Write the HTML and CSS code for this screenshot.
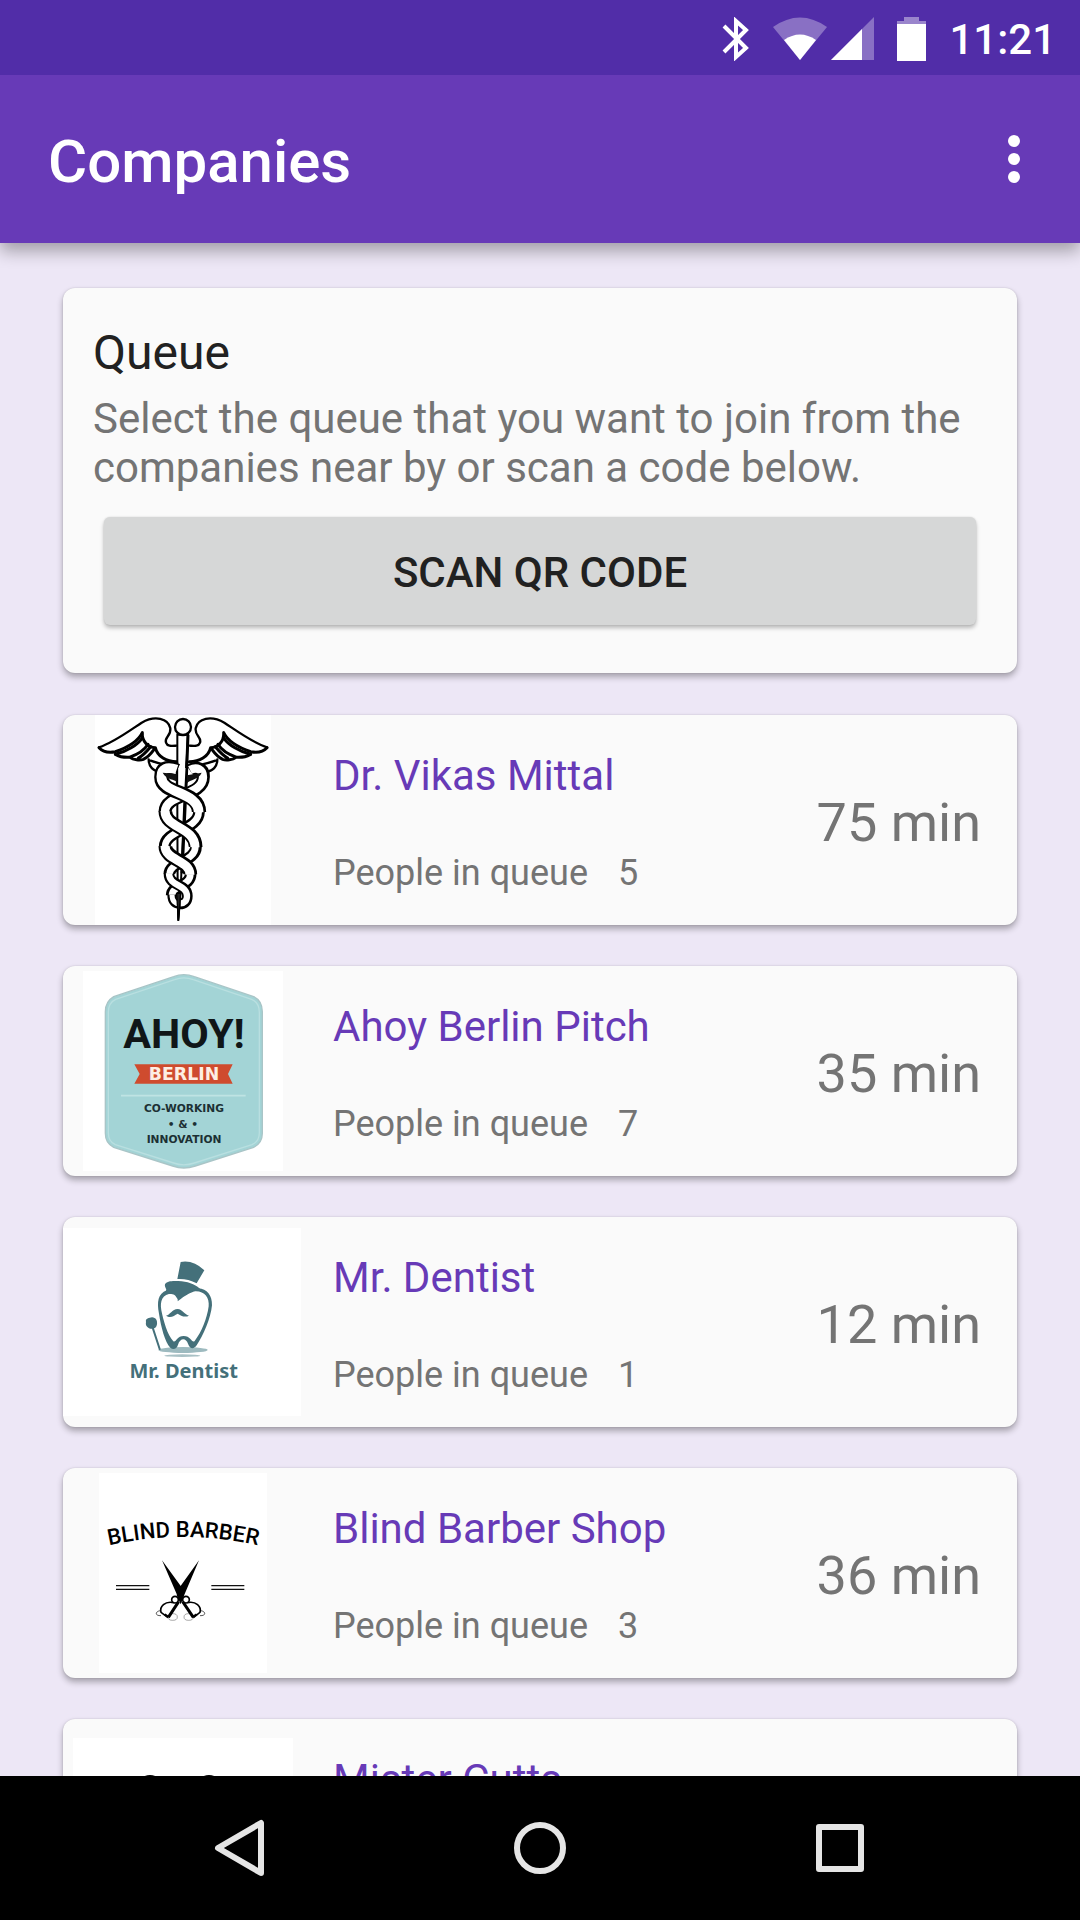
FILE: index.html
```html
<!DOCTYPE html>
<html lang="en">
<head>
<meta charset="utf-8">
<meta name="viewport" content="width=device-width, initial-scale=1">
<title>Companies</title>
<link rel="stylesheet" href="styles.css">
</head>
<body>
<div class="status-bar">
  <svg class="status-icon" width="28" height="44" viewBox="0 0 28 44" aria-label="Bluetooth"><path d="M2 9L24 31 14 40V4L24 13 2 35" fill="none" stroke="#fff" stroke-width="4"/></svg>
  <div class="status-group">
    <svg class="status-icon" width="54" height="44" viewBox="0 0 54 44" aria-label="Wi-Fi"><path d="M0 10Q27-9 54 10L27 43Z" fill="#fff" opacity=".32"/><path d="M11 23Q27 12 43 23L27 43Z" fill="#fff"/></svg>
    <svg class="status-icon" width="43" height="44" viewBox="0 0 43 44" aria-label="Mobile signal"><path d="M43 0V43H0Z" fill="#fff" opacity=".32"/><path d="M31 12V43H0Z" fill="#fff"/></svg>
  </div>
  <svg class="status-icon" width="29" height="44" viewBox="0 0 29 44" aria-label="Battery"><path d="M7 0H22V4H29V8H0V4H7Z" fill="#fff" opacity=".42"/><path d="M0 7H29V44H0Z" fill="#fff"/></svg>
  <time class="clock">11:21</time>
</div>
<header class="app-bar">
  <h1 class="app-title">Companies</h1>
  <button class="menu-button" type="button" aria-label="More options">
    <svg width="12" height="48" viewBox="0 0 12 48" fill="#fff"><circle cx="6" cy="6" r="6"/><circle cx="6" cy="24" r="6"/><circle cx="6" cy="42" r="6"/></svg>
  </button>
</header>
<main class="content">
  <section class="card queue-card">
    <h2 class="queue-title">Queue</h2>
    <p class="queue-text">Select the queue that you want to join from the companies near by or scan a code below.</p>
    <button class="scan-button" type="button">SCAN QR CODE</button>
  </section>
  <a class="card company" href="#vikas">
    <span class="logo">
      <svg width="176" height="210" viewBox="105 45 528 630">
        <path fill="#fff" d="M105 45h528v630H105z"/>
        <defs>
          <g id="wing" fill="none" stroke="#000" stroke-width="7" stroke-linejoin="round" stroke-linecap="round">
            <path d="M117 142C160 128 200 98 245 68C285 45 325 55 331 85C334 108 312 112 318 128C322 140 335 138 349 137"/>
            <path stroke-width="9" d="M117 143C130 157 150 158 166 155C205 142 235 122 247 98C245 125 265 142 286 143C292 170 320 185 350 185"/>
            <path stroke-width="9" d="M166 163C200 155 232 135 246 115M168 164C185 174 200 172 208 172C238 162 255 148 264 133M210 172C220 180 240 182 250 178C268 170 275 158 284 146M235 174C250 166 262 152 272 140"/>
            <path d="M266 178C266 200 280 214 300 214M272 182C300 192 320 198 348 198"/>
          </g>
        </defs>
        <use href="#wing"/>
        <use href="#wing" transform="translate(738 0) scale(-1 1)"/>
        <path d="M352 104V330L353 570L355 662L362 570L372 330L384 104Z" fill="#fff" stroke="#000" stroke-width="6"/>
        <path d="M384 104L378 260L366 520" fill="none" stroke="#000" stroke-width="9"/>
        <path d="M350 575L355 662L362 575Z" fill="#222" stroke="#000" stroke-width="4"/>
        <circle cx="369" cy="81" r="24" fill="#fff" stroke="#000" stroke-width="7"/>
        <g fill="none">
          <path d="M390 212C410 198 432 205 430 232C430 290 315 280 315 335" stroke="#000" stroke-width="39"/>
          <path d="M390 210C410 200 429 207 429 232C429 288 315 282 315 335" stroke="#fff" stroke-width="25"/>
          <path d="M417 335C417 390 314 390 314 440M408 440C408 485 328 485 328 522M392 522C392 560 335 555 335 586" stroke="#000" stroke-width="35"/>
          <path d="M416 335C416 390 315 390 315 440M406 440C406 485 329 485 329 522M391 522C391 560 336 555 336 586" stroke="#fff" stroke-width="20"/>
          <path d="M335 584C335 605 345 615 365 613" stroke="#000" stroke-width="26"/>
          <path d="M336 584C336 603 345 613 362 611" stroke="#fff" stroke-width="15"/>
        </g>
        <path d="M351 204L380 204L377 262L351 254Z" fill="#fff"/><path d="M351 185V258M381 185L377 262" fill="none" stroke="#000" stroke-width="7"/>
        <g fill="none">
          <path d="M350 212C320 196 304 206 304 232C304 285 417 270 417 336" stroke="#000" stroke-width="43"/>
          <path d="M350 209C320 199 304 206 304 230C304 282 416 274 416 337" stroke="#fff" stroke-width="29"/>
          <path d="M316 334C316 385 407 380 407 441M316 439C316 480 391 480 391 523" stroke="#000" stroke-width="41"/>
          <path d="M315 333C315 385 405 380 405 442M315 438C315 482 390 480 390 524" stroke="#fff" stroke-width="27"/>
          <path d="M327 521C327 560 382 550 382 588C382 605 372 612 360 612" stroke="#000" stroke-width="32"/>
          <path d="M327 520C327 560 381 552 381 588C381 603 372 610 362 610" stroke="#fff" stroke-width="19"/>
        </g>
        <path d="M308 218C320 240 345 238 350 245V222ZM425 218C415 240 390 238 381 250V226Z" fill="#111"/>
        <path d="M350 580L355 662L362 580Z" fill="#222" stroke="#000" stroke-width="4"/>
      </svg>
    </span>
    <span class="details"><span class="name">Dr. Vikas Mittal</span><span class="people"><span>People in queue</span><span>5</span></span></span>
    <span class="wait">75 min</span>
  </a>
  <a class="card company" href="#ahoy">
    <span class="logo">
      <svg width="200" height="200" viewBox="68 63 600 600">
        <path fill="#fff" d="M68 63h600v600H68z"/>
        <path d="M340 80Q370 68 402 80L580 140Q606 153 606 185V550Q606 580 580 592L405 648Q370 660 337 648L160 592Q135 580 135 550V185Q135 155 160 140Z" fill="#a3d4d6" stroke="#a9c5c7" stroke-width="4"/>
        <path d="M343 89Q370 78 399 89L574 148Q597 158 597 187V548Q597 574 575 584L402 639Q370 650 340 639L165 584Q144 574 144 548V187Q144 158 166 148Z" fill="none" stroke="#b9dfe0" stroke-width="4"/>
        <text class="ahoy-name" x="371" y="295">AHOY!</text>
        <path d="M222 343H517L503 372L517 401H222L238 372Z" fill="#cf4b2e"/>
        <text class="ahoy-city" x="371" y="390">BERLIN</text>
        <path d="M182 437H556" stroke="#bfe3e3" stroke-width="5"/>
        <text class="ahoy-line" x="371" y="487">CO-WORKING</text>
        <text class="ahoy-line" x="368" y="533">• &amp; •</text>
        <text class="ahoy-line" x="371" y="579">INNOVATION</text>
      </svg>
    </span>
    <span class="details"><span class="name">Ahoy Berlin Pitch</span><span class="people"><span>People in queue</span><span>7</span></span></span>
    <span class="wait">35 min</span>
  </a>
  <a class="card company" href="#dentist">
    <span class="logo dentist-logo">
      <svg width="238" height="188" viewBox="9 53 714 564">
        <path fill="#fff" d="M9 53h714v564H9z"/>
        <ellipse cx="369" cy="419" rx="74" ry="9" fill="#9dbabf"/><ellipse cx="367" cy="436" rx="54" ry="4" fill="#a9c1c5"/>
        <g fill="#44707a">
          <path d="M362 155Q400 148 433 180L410 219Q382 204 352 206Z"/>
          <path d="M315 222C320 210 345 211 365 213C390 216 412 225 423 239C400 240 375 255 353 273C355 266 350 262 346 256C340 250 330 252 315 245C325 237 312 233 315 222Z"/>
          <path d="M318 316C330 314 336 297 353 296C368 297 372 312 387 316C374 323 362 315 353 310C342 316 332 325 318 316Z"/>
          <path d="M258 335C255 325 268 322 276 321C288 321 293 332 291 342C290 354 280 357 271 355C260 351 256 345 258 335Z"/>
        </g>
        <path d="M278 352L299 416" stroke="#44707a" stroke-width="6" stroke-linecap="round"/>
        <path fill-rule="evenodd" fill="#44707a" d="M320 240C294 250 290 275 297 310C303 350 315 395 331 412C340 420 350 416 354 403C360 382 378 381 384 400C390 417 402 417 410 405C430 375 452 325 456 285C457 255 441 236 415 234L402 243C432 240 449 260 446 288C441 325 425 365 404 392C396 400 393 377 371 377C350 377 348 398 340 393C322 375 310 330 304 300C299 270 308 247 345 251Z"/>
        <text class="dentist-name" x="371" y="502">Mr. Dentist</text>
      </svg>
    </span>
    <span class="details"><span class="name">Mr. Dentist</span><span class="people"><span>People in queue</span><span>1</span></span></span>
    <span class="wait">12 min</span>
  </a>
  <a class="card company" href="#barber">
    <span class="logo">
      <svg width="168" height="200" viewBox="117 39 504 600">
        <path fill="#fff" d="M117 39h504v600H117z"/>
        <path id="arc" d="M120 262Q367 200 620 262" fill="none"/>
        <text class="barber-name"><textPath href="#arc" startOffset="50%">BLIND BARBER</textPath></text>
        <path d="M168 377H268M168 388H268M454 377H553M454 388H553" stroke="#111" stroke-width="4"/>
        <path d="M306 301L366 383L372 405L362 432L350 402Z"/><path d="M417 301L358 383L350 405L362 432L374 402Z"/>
        <g fill="none" stroke="#000" stroke-width="5">
          <circle cx="345" cy="419" r="10"/><circle cx="378" cy="419" r="10"/>
          <path d="M341 428C315 422 298 440 303 457L324 473M382 428C408 422 425 440 420 457L400 473"/>
          <path stroke-width="9" d="M356 425L325 472M368 425L400 472"/>
          <path stroke-width="7" d="M314 463L324 470M410 463L400 470"/>
          <path stroke-width="2" d="M301 452C285 454 284 468 303 467M422 452C438 454 439 468 420 467"/>
          <ellipse cx="338" cy="471" rx="14" ry="10" stroke-width="1"/><ellipse cx="386" cy="471" rx="14" ry="10" stroke-width="1"/>
        </g>
      </svg>
    </span>
    <span class="details"><span class="name">Blind Barber Shop</span><span class="people"><span>People in queue</span><span>3</span></span></span>
    <span class="wait">36 min</span>
  </a>
  <a class="card company" href="#cutts">
    <span class="logo">
      <svg width="220" height="172" viewBox="0 0 220 172">
        <path fill="#fff" d="M0 0h220v172H0z"/>
        <g fill="none" stroke="#000" stroke-width="4"><circle cx="77" cy="50" r="11"/><circle cx="136" cy="50" r="11"/><path d="M84 59L130 120M129 59L83 120"/></g>
      </svg>
    </span>
    <span class="details"><span class="name">Mister Cutts</span></span>
  </a>
</main>
<nav class="nav-bar" aria-label="System">
  <button class="nav-button" type="button" aria-label="Back"><svg width="60" height="60" viewBox="0 0 60 60"><path d="M51 5V55L8 30Z"/></svg></button>
  <button class="nav-button" type="button" aria-label="Home"><svg width="60" height="60" viewBox="0 0 60 60"><circle cx="30" cy="30" r="23"/></svg></button>
  <button class="nav-button" type="button" aria-label="Recent apps"><svg width="60" height="60" viewBox="0 0 60 60"><path d="M9 9H51V51H9Z"/></svg></button>
</nav>
</body>
</html>
```

FILE: styles.css
```css
* { box-sizing: border-box; }

body {
  display: flex;
  flex-direction: column;
  height: 100vh;
  margin: 0;
  background: #ede7f6;
  color: #212121;
  font-family: Roboto, sans-serif;
}

h1, h2, p { margin: 0; font-weight: 400; }

button {
  border: 0;
  padding: 0;
  background: none;
  font: inherit;
  color: inherit;
}

svg { display: block; flex: none; }

.status-bar {
  display: flex;
  flex: none;
  align-items: center;
  justify-content: flex-end;
  gap: 23px;
  height: 75px;
  padding: 2px 24px 0 0;
  background: #512da8;
  color: #fff;
  z-index: 2;
}

.status-group { display: flex; gap: 4px; }

.clock {
  padding-top: 2px;
  font-size: 42px;
  font-weight: 500;
  line-height: 50px;
}

.app-bar {
  display: flex;
  flex: none;
  align-items: center;
  justify-content: space-between;
  height: 168px;
  padding: 0 18px 0 48px;
  background: #673ab7;
  color: #fff;
  box-shadow: 0 8px 16px rgba(0, 0, 0, .32);
  z-index: 1;
}

.app-title {
  padding-top: 5px;
  font-size: 60px;
  font-weight: 500;
  line-height: 72px;
}

.menu-button {
  display: grid;
  place-items: center;
  width: 96px;
  height: 96px;
}

.content {
  display: flex;
  flex: 1;
  flex-direction: column;
  gap: 41px;
  min-height: 0;
  padding: 45px 63px;
  overflow-y: auto;
  scrollbar-width: none;
}

.card {
  flex: none;
  border-radius: 12px;
  background: #fafafa;
  box-shadow: 0 4px 6px rgba(0, 0, 0, .3), 0 0 2px rgba(0, 0, 0, .14);
}

.queue-card {
  display: flex;
  flex-direction: column;
  margin-bottom: 1px;
  padding: 37px 30px 48px;
}

.queue-title { font-size: 48px; line-height: 56px; }

.queue-text {
  margin: 13px 0 25px;
  color: #747474;
  font-size: 42px;
  line-height: 49px;
}

.scan-button {
  height: 108px;
  margin: 0 11px;
  padding-top: 2px;
  border-radius: 6px;
  background: #d6d7d7;
  box-shadow: 0 3px 4px rgba(0, 0, 0, .26), 0 0 2px rgba(0, 0, 0, .12);
  font-size: 42px;
  font-weight: 500;
}

.company {
  display: flex;
  min-height: 210px;
  padding-right: 36px;
  overflow: hidden;
  color: #747474;
  text-decoration: none;
}

.logo {
  display: grid;
  flex: none;
  place-items: center;
  width: 240px;
}

.dentist-logo { justify-items: start; }

.details {
  display: flex;
  flex: 1;
  flex-direction: column;
  justify-content: space-between;
  padding: 36px 30px 31px;
}

.name {
  color: #673ab7;
  font-size: 42px;
  line-height: 49px;
}

.people {
  display: flex;
  gap: 30px;
  font-size: 36px;
  line-height: 42px;
}

.wait {
  align-self: center;
  padding-top: 4px;
  font-size: 54px;
  line-height: 63px;
}

.ahoy-name, .ahoy-city, .ahoy-line, .dentist-name, .barber-name { text-anchor: middle; font-weight: 700; }
.ahoy-name { fill: #101618; font-size: 124px; }
.ahoy-city { fill: #fdeee4; font-family: "DejaVu Sans", sans-serif; font-size: 52px; }
.ahoy-line { fill: #1c3034; font-family: "DejaVu Sans", sans-serif; font-size: 32px; }
.dentist-name { fill: #44707a; font-family: "Noto Sans", sans-serif; font-size: 60px; }
.barber-name { fill: #000; font-size: 66px; font-weight: 500; }

.nav-bar {
  display: flex;
  flex: none;
  height: 144px;
  padding: 0 90px;
  background: #000;
}

.nav-button {
  display: grid;
  flex: 1;
  place-items: center;
}

.nav-button svg {
  fill: none;
  stroke: #e5e5e5;
  stroke-width: 6;
  stroke-linejoin: round;
}
```
